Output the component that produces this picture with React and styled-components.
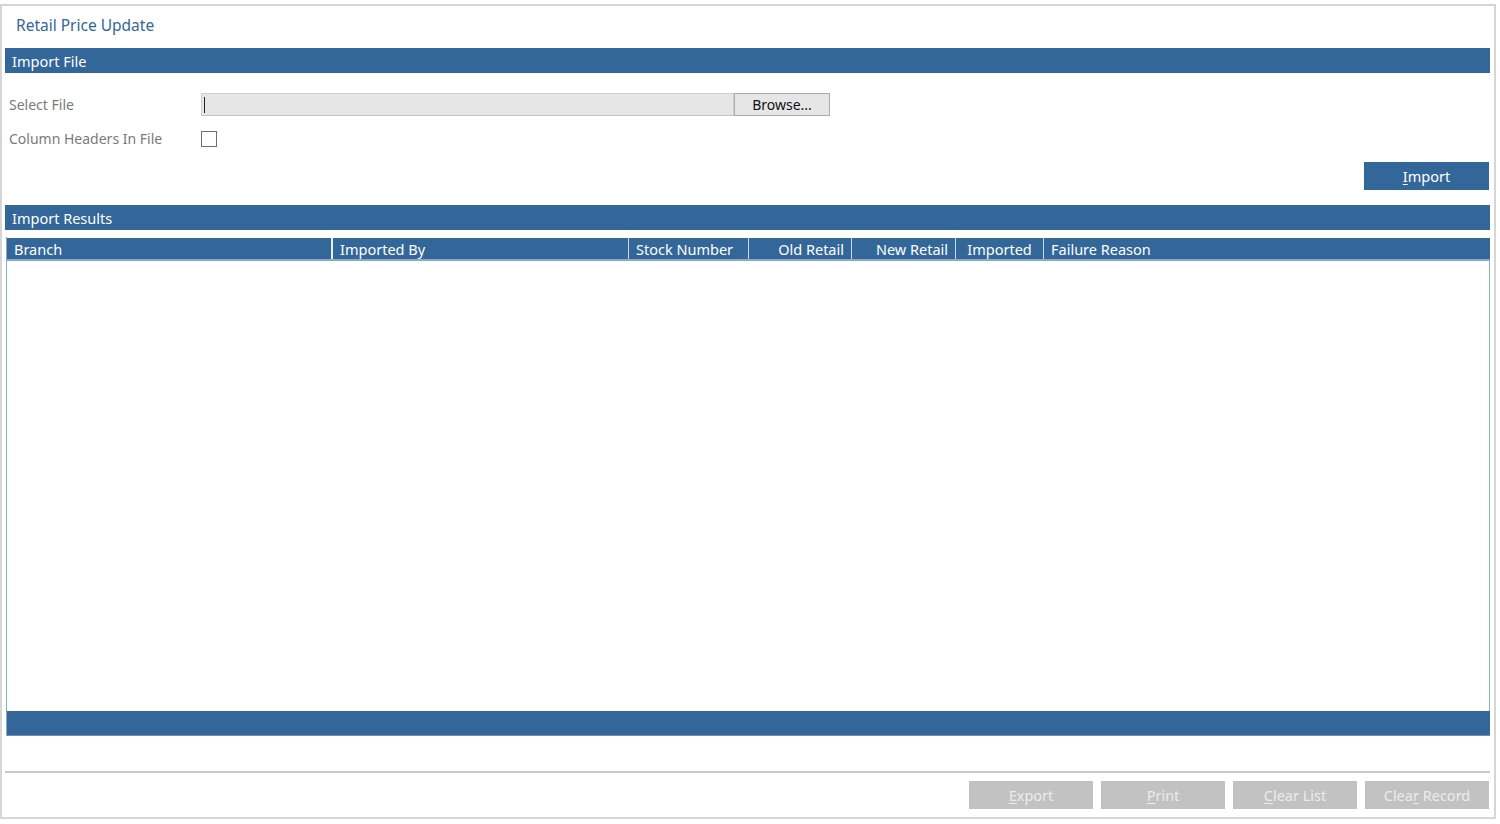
import styled, { createGlobalStyle } from 'styled-components';

const Global = createGlobalStyle`
    html, body {
        margin: 0;
        padding: 0;
        background: #fff;
        font-family: "Noto Sans", "DejaVu Sans", sans-serif;
    }
`

const Frame = styled.div`
    box-sizing: border-box;
    margin-top: 4px;
    width: 1496px;
    height: 815px;
    border: 2px solid #d6d6d6;
    padding: 0 4px 0 3px;
    display: flex;
    flex-direction: column;
`

const Title = styled.div`
    height: 42px;
    display: flex;
    align-items: center;
    padding-left: 11px;
    padding-bottom: 4px;
    box-sizing: border-box;
    color: #336699;
    font-size: 15.5px;
`

const SectionBar = styled.div`
    height: 25px;
    background: #336699;
    color: #fff;
    font-size: 14.5px;
    display: flex;
    align-items: center;
    padding-left: 7px;
`

const Form = styled.div`
    padding: 20px 0 0 4px;
    display: flex;
    flex-direction: column;
    gap: 11px;
`

const Row = styled.div`
    display: flex;
    align-items: center;
    height: 23px;
`

const Label = styled.div`
    width: 192px;
    color: #7a7a7a;
    font-size: 14px;
`

const FileBox = styled.div`
    box-sizing: border-box;
    width: 533px;
    height: 23px;
    background: #e6e6e6;
    border: 1px solid #cfcfcf;
    border-bottom-color: #c4c4c4;
    display: flex;
    align-items: center;
    padding-left: 2px;
`

const Caret = styled.span`
    width: 1px;
    height: 16px;
    background: #222;
`

const Browse = styled.div`
    box-sizing: border-box;
    width: 96px;
    height: 23px;
    background: #e6e6e6;
    border: 1px solid #ababab;
    display: flex;
    align-items: center;
    justify-content: center;
    font-size: 14px;
    color: #111;
`

const Check = styled.div`
    box-sizing: border-box;
    width: 16px;
    height: 16px;
    border: 1px solid #6f6f6f;
    background: #fff;
`

const ActionRow = styled.div`
    display: flex;
    justify-content: flex-end;
    padding: 12px 1px 15px 0;
`

const Button = styled.div`
    width: ${p => (p.disabled ? 124 : 125)}px;
    height: 28px;
    background: ${p => (p.disabled ? '#c2c2c2' : '#336699')};
    color: ${p => (p.disabled ? '#ececec' : '#fff')};
    display: flex;
    align-items: center;
    justify-content: center;
    font-size: 14.5px;
    u {
        text-decoration: underline;
        text-underline-offset: 2px;
    }
`

const Grid = styled.div`
    margin: 7px 0 0 1px;
    height: 499px;
    border-left: 1px solid #8aa9c9;
    display: flex;
    flex-direction: column;
`

const HeadRow = styled.div`
    display: flex;
    height: 21px;
    margin-top: 1px;
    background: #336699;
    border-bottom: 2px solid #8aa9c9;
`

const HeadCell = styled.div`
    box-sizing: border-box;
    width: ${p => p.w}px;
    flex: ${p => (p.w ? 'none' : '1')};
    color: #fff;
    font-size: 14.5px;
    display: flex;
    align-items: center;
    justify-content: ${p => p.align || 'flex-start'};
    padding: 0 7px;
    border-right: ${p => (p.last ? 'none' : p.thick ? '2px solid #e8eef5' : '1px solid #c7d5e4')};
`

const Body = styled.div`
    flex: 1;
    background: #fff;
    border-right: 1px solid #8aa9c9;
`

const GridFoot = styled.div`
    height: 24px;
    background: #336699;
    border-bottom: 1px solid #6d8fb6;
`

const Divider = styled.div`
    margin-top: 35px;
    height: 2px;
    background: #c8c8c8;
`

const Footer = styled.div`
    display: flex;
    justify-content: flex-end;
    gap: 8px;
    padding: 8px 1px 0 0;
`

const columns = [
    { label: 'Branch', w: 326, thick: true },
    { label: 'Imported By', w: 296 },
    { label: 'Stock Number', w: 120 },
    { label: 'Old Retail', w: 103, align: 'flex-end' },
    { label: 'New Retail', w: 104, align: 'flex-end' },
    { label: 'Imported', w: 88, align: 'center' },
    { label: 'Failure Reason', last: true },
]

function App() {
    return (
        <>
            <Global />
            <Frame>
                <Title>Retail Price Update</Title>
                <SectionBar>Import File</SectionBar>

                <Form>
                    <Row>
                        <Label>Select File</Label>
                        <FileBox><Caret /></FileBox>
                        <Browse>Browse...</Browse>
                    </Row>
                    <Row>
                        <Label>Column Headers In File</Label>
                        <Check />
                    </Row>
                </Form>

                <ActionRow>
                    <Button><span><u>I</u>mport</span></Button>
                </ActionRow>

                <SectionBar>Import Results</SectionBar>

                <Grid>
                    <HeadRow>
                        {columns.map(c => (
                            <HeadCell key={c.label} w={c.w} align={c.align} thick={c.thick} last={c.last}>
                                {c.label}
                            </HeadCell>
                        ))}
                    </HeadRow>
                    <Body />
                    <GridFoot />
                </Grid>

                <Divider />

                <Footer>
                    <Button disabled><span><u>E</u>xport</span></Button>
                    <Button disabled><span><u>P</u>rint</span></Button>
                    <Button disabled><span><u>C</u>lear List</span></Button>
                    <Button disabled><span>Clea<u>r</u> Record</span></Button>
                </Footer>
            </Frame>
        </>
    )
}

export default App
